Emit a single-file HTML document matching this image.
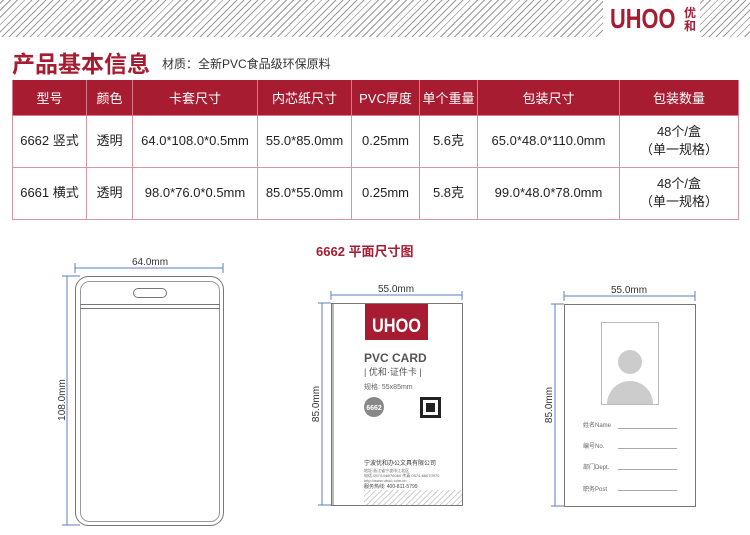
<!DOCTYPE html>
<html><head><meta charset="utf-8"><style>
*{margin:0;padding:0;box-sizing:border-box}
body{width:750px;height:535px;background:#fff;font-family:"Liberation Sans","Noto Sans CJK SC",sans-serif;position:relative;overflow:hidden;color:#333}
.hatch{position:absolute;left:0;top:0;width:750px;height:37px;background:repeating-linear-gradient(135deg,#fff 0 2px,#9a9a9a 2px 3px,#fff 3px 5px)}
.logo{position:absolute;left:603px;top:0;width:97px;height:37px;background:#fff}
.abs{position:absolute}
table{position:absolute;left:12px;top:80px;border-collapse:collapse;table-layout:fixed;width:726px}
td,th{text-align:center;font-size:13px;border:1px solid #d896a2}
th{background:#a81c32;color:#fff;font-weight:normal;height:35px;border-color:#d67a88;border-top:none}
td{height:52px;color:#222;line-height:18px}
</style></head><body>
<div class="hatch"></div>
<div class="logo">
<div class="abs" style="left:7px;top:5px;font:bold 28px/28px 'Liberation Sans',sans-serif;color:#a81c32;transform:scaleX(0.78);transform-origin:left">UHOO</div>
<div class="abs" style="left:81px;top:6px;font:bold 12px/13px 'Noto Sans CJK SC',sans-serif;color:#a81c32">优<br>和</div>
</div>
<div class="abs" style="left:12px;top:47px;font:bold 23px/30px 'Noto Sans CJK SC',sans-serif;color:#a81c32">产品基本信息</div>
<div class="abs" style="left:162px;top:56px;font-size:12px;line-height:16px;color:#333">材质：全新PVC食品级环保原料</div>
<table>
<colgroup><col style="width:74px"><col style="width:46px"><col style="width:125px"><col style="width:94px"><col style="width:68px"><col style="width:58px"><col style="width:142px"><col style="width:119px"></colgroup>
<tr><th>型号</th><th>颜色</th><th>卡套尺寸</th><th>内芯纸尺寸</th><th>PVC厚度</th><th>单个重量</th><th>包装尺寸</th><th>包装数量</th></tr>
<tr><td>6662 竖式</td><td>透明</td><td>64.0*108.0*0.5mm</td><td>55.0*85.0mm</td><td>0.25mm</td><td>5.6克</td><td>65.0*48.0*110.0mm</td><td>48个/盒<br>（单一规格）</td></tr>
<tr><td>6661 横式</td><td>透明</td><td>98.0*76.0*0.5mm</td><td>85.0*55.0mm</td><td>0.25mm</td><td>5.8克</td><td>99.0*48.0*78.0mm</td><td>48个/盒<br>（单一规格）</td></tr>
</table>
<div class="abs" style="left:316px;top:243px;font:bold 13px/18px 'Liberation Sans','Noto Sans CJK SC',sans-serif;color:#a81c32">6662 平面尺寸图</div>
<svg class="abs" style="left:0;top:0" width="750" height="535" font-family="Liberation Sans, Noto Sans CJK SC, sans-serif">
<g stroke="#5b7fc0" stroke-width="1" fill="none">
<line x1="75" y1="268" x2="223" y2="268"/><line x1="75" y1="263" x2="75" y2="273"/><line x1="223" y1="263" x2="223" y2="273"/>
<line x1="67" y1="276" x2="67" y2="525"/><line x1="62" y1="276" x2="80" y2="276"/><line x1="62" y1="525" x2="80" y2="525"/>
<line x1="331" y1="295" x2="462" y2="295"/><line x1="331" y1="291" x2="331" y2="300"/><line x1="462" y1="291" x2="462" y2="300"/>
<line x1="322" y1="303" x2="322" y2="505"/><line x1="318" y1="303" x2="331" y2="303"/><line x1="318" y1="505" x2="331" y2="505"/>
<line x1="564" y1="296" x2="695" y2="296"/><line x1="564" y1="291" x2="564" y2="301"/><line x1="695" y1="291" x2="695" y2="301"/>
<line x1="555" y1="304" x2="555" y2="506"/><line x1="551" y1="304" x2="564" y2="304"/><line x1="551" y1="506" x2="564" y2="506"/>
</g>
<g font-size="10" fill="#333" text-anchor="middle">
<text x="150" y="265">64.0mm</text>
<text transform="translate(65,400) rotate(-90)">108.0mm</text>
<text x="396" y="292">55.0mm</text>
<text transform="translate(319,404) rotate(-90)">85.0mm</text>
<text x="629" y="293">55.0mm</text>
<text transform="translate(552,405) rotate(-90)">85.0mm</text>
</g>
<g fill="none" stroke="#777" stroke-width="1">
<rect x="75.5" y="276.5" width="148" height="249" rx="13"/>
<rect x="80.5" y="281.5" width="139" height="240" rx="9" stroke="#999"/>
<line x1="80" y1="304.5" x2="220" y2="304.5"/>
<line x1="80" y1="308.5" x2="220" y2="308.5"/>
<rect x="133.5" y="288.5" width="33" height="9" rx="4.5"/>
</g>
<rect x="331.5" y="303.5" width="131" height="202" fill="#fff" stroke="#777"/>
<line x1="333" y1="304" x2="333" y2="505" stroke="#bbb" stroke-width="2"/>
<rect x="365" y="304" width="63" height="36" fill="#a81c32"/>
<text x="372" y="332" font-size="19" font-weight="bold" fill="#fff" textLength="49" lengthAdjust="spacingAndGlyphs">UHOO</text>
<text x="364" y="362" font-size="12" font-weight="bold" fill="#555">PVC CARD</text>
<text x="364" y="375" font-size="9" fill="#555">| 优和·证件卡 |</text>
<text x="364" y="389" font-size="7" fill="#666">规格: 55x85mm</text>
<circle cx="374" cy="407" r="10" fill="#888"/>
<text x="374" y="410" font-size="7" font-weight="bold" fill="#fff" text-anchor="middle">6662</text>
<rect x="420" y="397" width="21" height="21" fill="#222"/>
<rect x="423" y="400" width="15" height="15" fill="#fff"/>
<rect x="426" y="403" width="9" height="9" fill="#222"/>
<text x="364" y="465" font-size="6" fill="#333">宁波优和办公文具有限公司</text>
<text x="364" y="472" font-size="4" fill="#666">地址:浙江省宁波市江北区</text>
<text x="364" y="477" font-size="4" fill="#666">电话:0574-66076060 传真:0574-66070970</text>
<text x="364" y="482" font-size="4" fill="#666">http://www.uhoo.com.cn</text>
<text x="364" y="488" font-size="5" fill="#444">服务热线: 400-811-5799</text>
<defs><pattern id="h" width="4" height="4" patternUnits="userSpaceOnUse" patternTransform="rotate(45)"><line x1="0" y1="0" x2="0" y2="4" stroke="#bbb" stroke-width="1.5"/></pattern></defs>
<rect x="364" y="490" width="98" height="15" fill="url(#h)"/>
<rect x="564.5" y="304.5" width="131" height="202" fill="#fff" stroke="#777"/>
<rect x="601.5" y="322.5" width="57" height="82" fill="#fff" stroke="#bbb"/>
<circle cx="630" cy="362" r="12" fill="#ccc"/>
<path d="M607 404 A23 23 0 0 1 653 404 Z" fill="#ccc"/>
<g font-size="6" fill="#666">
<text x="583" y="427">姓名Name</text><text x="583" y="448">编号No.</text><text x="583" y="469">部门Dept.</text><text x="583" y="491">职务Post</text>
</g>
<g stroke="#aaa"><line x1="618" y1="428.5" x2="677" y2="428.5"/><line x1="618" y1="448.5" x2="677" y2="448.5"/><line x1="618" y1="469.5" x2="677" y2="469.5"/><line x1="618" y1="490.5" x2="677" y2="490.5"/></g>
</svg>
</body></html>
